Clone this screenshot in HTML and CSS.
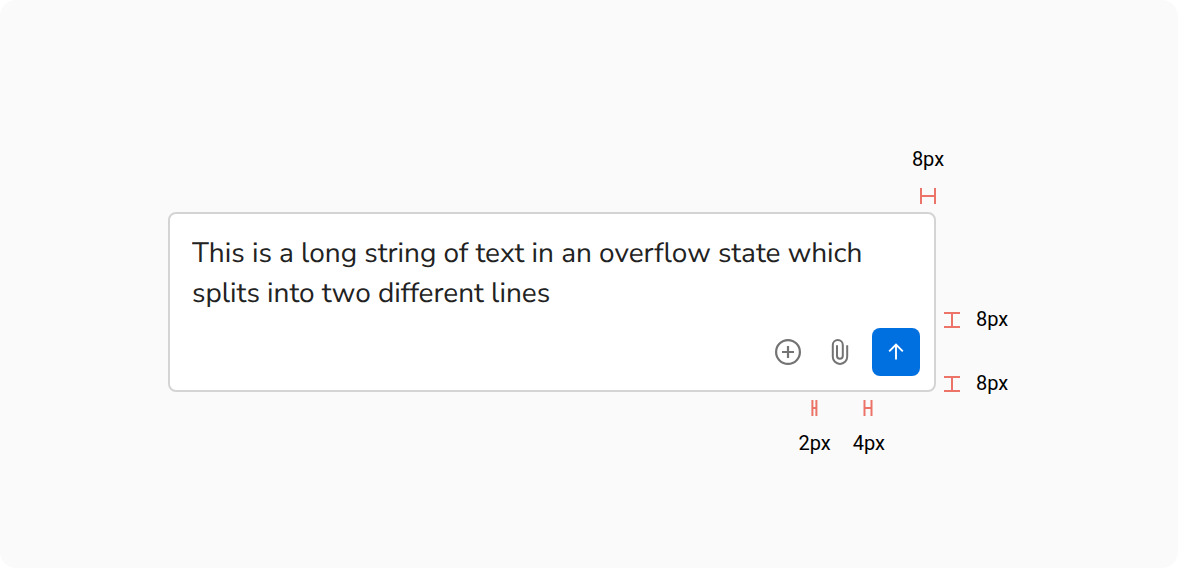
FILE: index.html
```html
<!DOCTYPE html>
<html lang="en">
<head>
<meta charset="utf-8">
<meta name="viewport" content="width=device-width, initial-scale=1">
<title>Prompt input spacing</title>
<link rel="stylesheet" href="styles.css">
</head>
<body>
<main class="canvas">
  <div class="spec">
    <div class="note note-top">
      <span class="label">8px</span>
      <svg class="mark" width="16" height="16" viewBox="0 0 16 16" aria-hidden="true"><path d="M1 0v16M15 0v16M1 8h14"/></svg>
    </div>
    <form class="composer">
      <textarea class="message" rows="2" aria-label="Message">This is a long string of text in an overflow state which splits into two different lines</textarea>
      <div class="actions">
        <button class="action" type="button" aria-label="Add">
          <svg width="28" height="28" viewBox="0 0 28 28" aria-hidden="true"><circle cx="14" cy="14" r="11.9"/><path d="M14 8v12M8 14h12"/></svg>
        </button>
        <button class="action" type="button" aria-label="Attach file">
          <svg class="clip" width="28" height="28" viewBox="0 0 28 28" aria-hidden="true"><path d="M21.2 7.2v11.5a7.2 7.2 0 0 1-14.4 0V7a5 5 0 0 1 10 0v10.8a2.9 2.9 0 0 1-5.8 0V7.2"/></svg>
        </button>
        <button class="action send" type="button" aria-label="Send">
          <svg width="24" height="24" viewBox="0 0 24 24" aria-hidden="true"><path d="M12 19.6V4.8M5.2 11.4 12 4.6l6.8 6.8"/></svg>
        </button>
      </div>
    </form>
    <div class="side">
      <div class="note note-side">
        <svg class="mark" width="16" height="16" viewBox="0 0 16 16" aria-hidden="true"><path d="M0 1h16M0 15h16M8 1v14"/></svg>
        <span class="label">8px</span>
      </div>
      <div class="note note-side">
        <svg class="mark" width="16" height="16" viewBox="0 0 16 16" aria-hidden="true"><path d="M0 1h16M0 15h16M8 1v14"/></svg>
        <span class="label">8px</span>
      </div>
    </div>
    <div class="bottom">
      <div class="note">
        <svg class="mark" width="8" height="16" viewBox="0 0 8 16" aria-hidden="true"><path d="M1.4 0v16M5.4 0v16M1.4 8h4"/></svg>
        <span class="label">2px</span>
      </div>
      <div class="note">
        <svg class="mark" width="12" height="16" viewBox="0 0 12 16" aria-hidden="true"><path d="M1.5 0v16M8.5 0v16M1.5 8h7"/></svg>
        <span class="label">4px</span>
      </div>
    </div>
  </div>
</main>
</body>
</html>
```
FILE: styles.css
```css
* {
  box-sizing: border-box;
}

body {
  margin: 0;
  background: #fff;
  color: #000;
  font-family: Roboto, "Liberation Sans", sans-serif;
}

.canvas {
  min-height: 100vh;
  margin-right: 14px;
  padding: 148px 168px 112px;
  border-radius: 16px;
  background: #fafafa;
}

.spec {
  display: grid;
  grid-template-columns: minmax(0, 768px) auto;
  justify-content: start;
  gap: 8px;
}

.note {
  display: flex;
  flex-direction: column;
  align-items: center;
  gap: 16px;
}

.label {
  padding-bottom: 2px;
  font-size: 20px;
  line-height: 22px;
}

.mark {
  flex: none;
  fill: none;
  stroke: #eb7367;
  stroke-width: 2;
}

.note-top {
  grid-column: 1;
  justify-self: end;
  width: 16px;
}

.composer {
  grid-column: 1;
  padding: 19px 14px 14px 22px;
  border: 2px solid #d4d4d4;
  border-radius: 8px;
  background: #fff;
}

.message {
  display: block;
  width: 100%;
  height: 80px;
  margin: 0 0 15px;
  padding: 0;
  border: 0;
  outline: 0;
  resize: none;
  overflow: hidden;
  background: transparent;
  color: #222;
  font-family: "Nunito Sans", Nunito, Lato, sans-serif;
  font-size: 28px;
  font-weight: 400;
  line-height: 40px;
  text-rendering: geometricPrecision;
}

.actions {
  display: flex;
  justify-content: flex-end;
  gap: 4px;
}

.action {
  display: flex;
  align-items: center;
  justify-content: center;
  width: 48px;
  height: 48px;
  padding: 0;
  border: 0;
  border-radius: 8px;
  background: transparent;
  color: #737373;
}

.action svg {
  fill: none;
  stroke: currentColor;
  stroke-width: 2.2;
}

.action .clip {
  stroke-width: 2;
}

.send {
  margin-left: 4px;
  background: #0070e0;
  color: #fff;
}

.action.send svg {
  stroke-width: 1.9;
}

.side {
  display: flex;
  flex-direction: column;
  justify-content: flex-end;
  gap: 48px;
}

.note-side {
  flex-direction: row;
  height: 16px;
}

.bottom {
  display: flex;
  justify-content: flex-end;
  gap: 22px;
  padding-right: 51px;
}
```
